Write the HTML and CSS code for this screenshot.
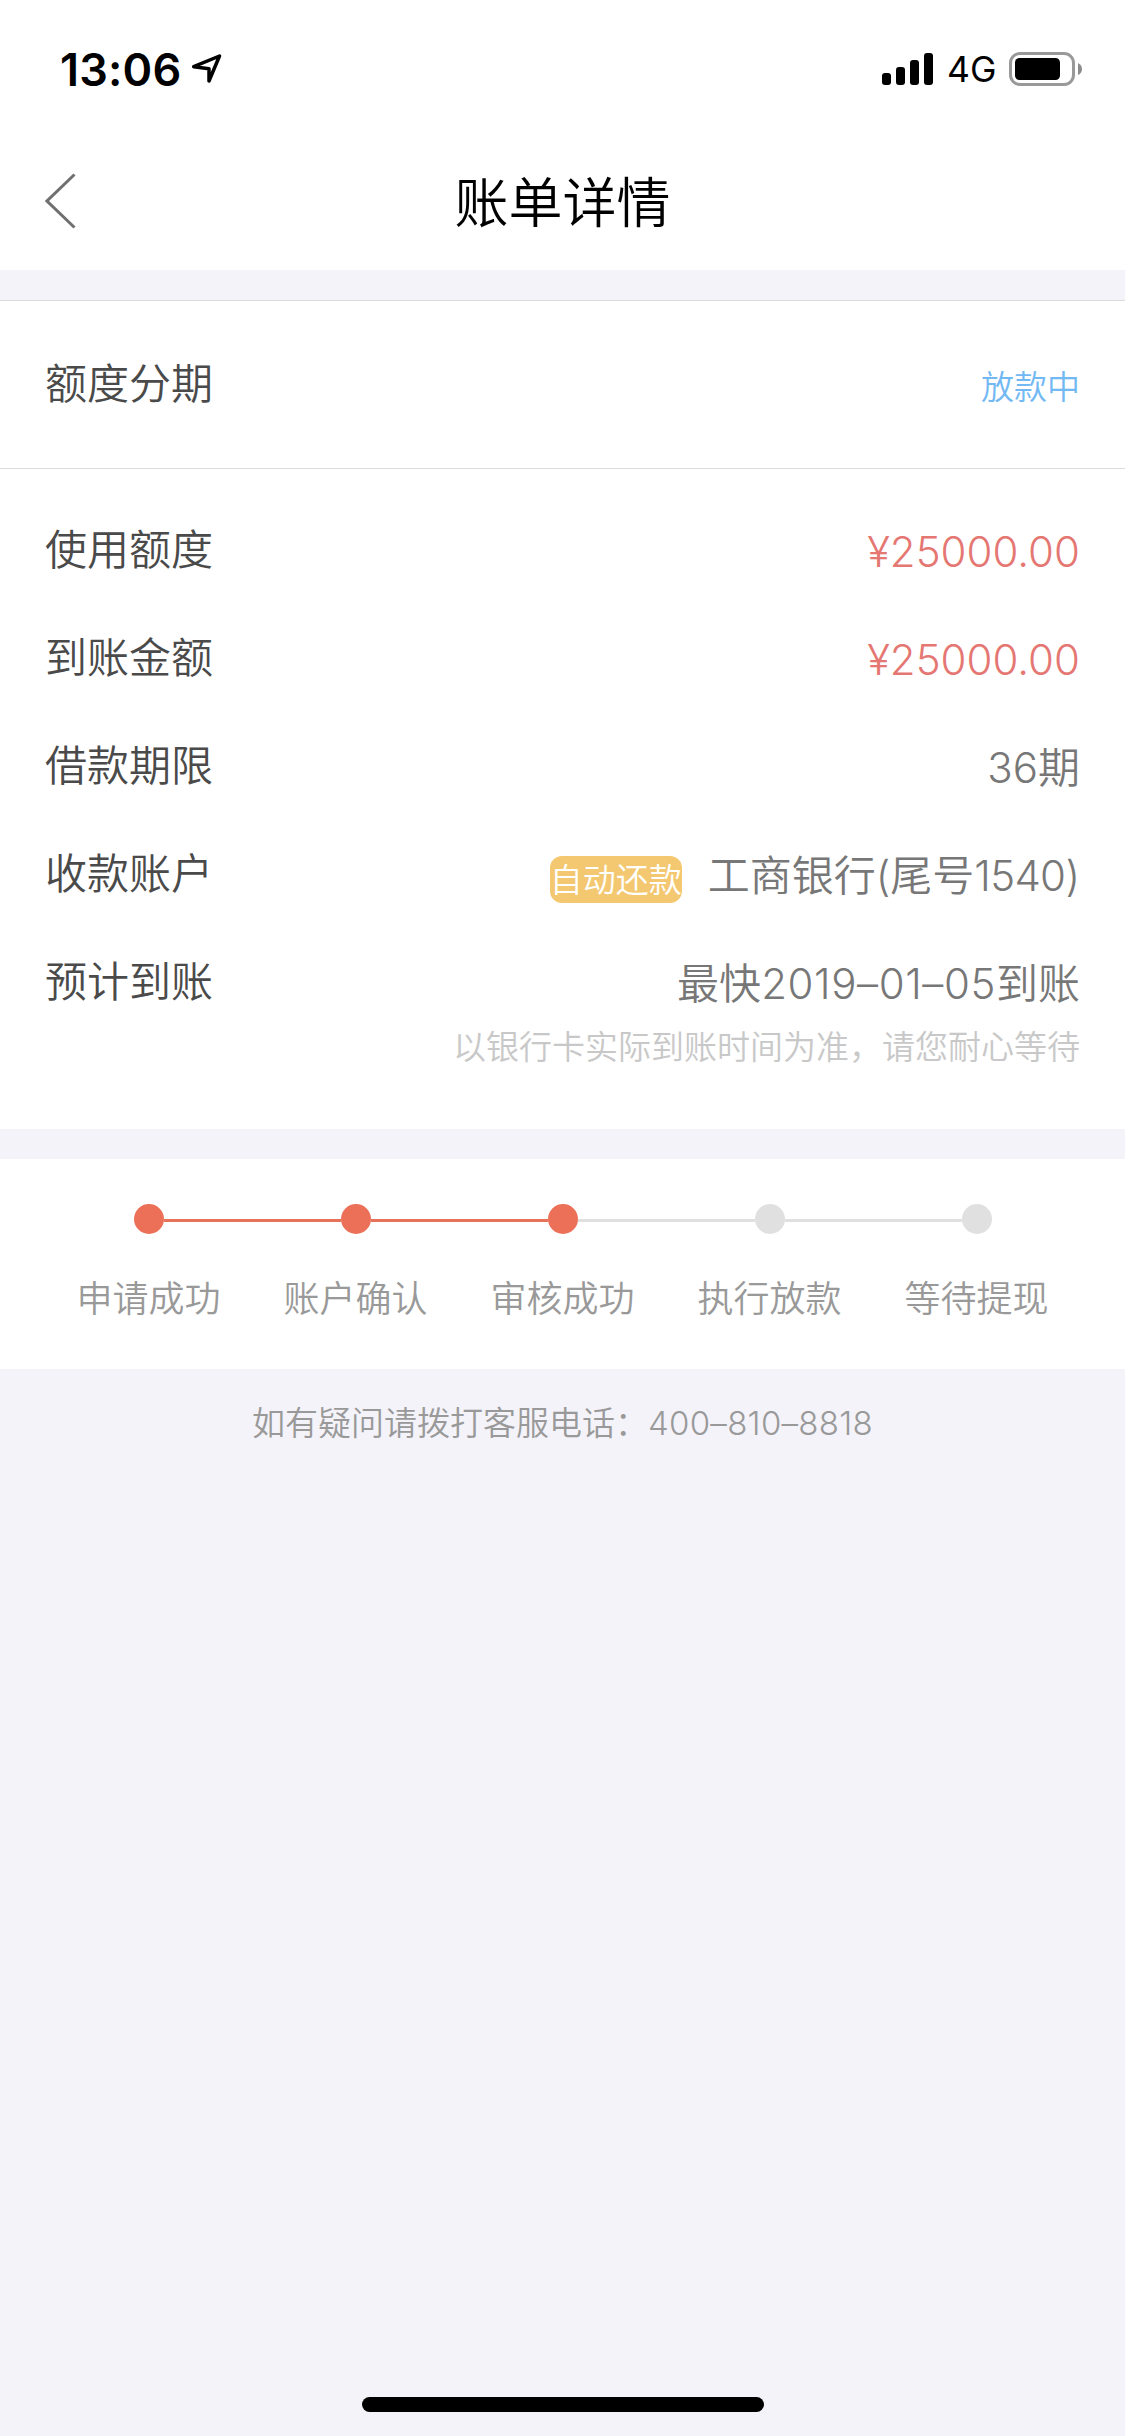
FILE: index.html
```html
<!DOCTYPE html>
<html lang="zh-CN">
<head>
<meta charset="utf-8">
<title>账单详情</title>
<link rel="stylesheet" href="styles.css">
</head>
<body>
<div class="screen">
  <header class="top">
    <div class="status-bar">
      <div class="status-left">
        <span class="time">13:06</span>
        <svg class="location" width="34" height="34" viewBox="0 0 34 34"><path d="M4.700 16.700L30.500 6L20 31V18.700Z" fill="none" stroke="#000" stroke-width="3.500" stroke-linejoin="round"/></svg>
      </div>
      <div class="status-right">
        <svg class="signal" width="51" height="32" viewBox="0 0 51 32"><rect x="0" y="20" width="9" height="12" rx="3"/><rect x="14" y="14" width="9" height="18" rx="3"/><rect x="28" y="7" width="9" height="25" rx="3"/><rect x="42" y="0" width="9" height="32" rx="3"/></svg>
        <span class="network">4G</span>
        <svg class="battery" width="74" height="34" viewBox="0 0 74 34"><rect x="1.500" y="1.500" width="63" height="31" rx="9.500" fill="none" stroke="#999" stroke-width="3"/><rect x="6" y="6" width="45" height="22" rx="4.500"/><path d="M69 11Q73 13 73 17Q73 21 69 23Z" fill="#8c8c8c"/></svg>
      </div>
    </div>
    <nav class="nav">
      <svg class="back" width="32" height="56" viewBox="0 0 32 56"><path d="M29.500 1.500L2 28L29.500 54.500" fill="none" stroke="#707070" stroke-width="3"/></svg>
      <h1 class="title">账单详情</h1>
    </nav>
  </header>

  <section class="card">
    <div class="card-head">
      <span class="label">额度分期</span>
      <span class="state">放款中</span>
    </div>
    <div class="details">
      <div class="row"><span class="label">使用额度</span><span class="value money">¥25000.00</span></div>
      <div class="row"><span class="label">到账金额</span><span class="value money">¥25000.00</span></div>
      <div class="row"><span class="label">借款期限</span><span class="value">36期</span></div>
      <div class="row"><span class="label">收款账户</span><div class="account"><span class="tag">自动还款</span><span class="value">工商银行(尾号<span class="card-no">1540</span>)</span></div></div>
      <div class="row"><span class="label">预计到账</span><span class="value">最快<span class="date">2019–01–05</span>到账</span></div>
      <p class="hint">以银行卡实际到账时间为准，请您耐心等待</p>
    </div>
  </section>

  <ol class="steps">
    <li class="step done"><i class="dot"></i><span>申请成功</span></li>
    <li class="step done"><i class="dot"></i><span>账户确认</span></li>
    <li class="step done"><i class="dot"></i><span>审核成功</span></li>
    <li class="step"><i class="dot"></i><span>执行放款</span></li>
    <li class="step"><i class="dot"></i><span>等待提现</span></li>
  </ol>

  <p class="service">如有疑问请拨打客服电话：<span class="phone">400–810–8818</span></p>
  <div class="home-bar"></div>
</div>
</body>
</html>
```
FILE: styles.css
```css
* { box-sizing: border-box; margin: 0; padding: 0; }

body {
  background: #f4f3f9;
  font-family: Inter, "Noto Sans CJK SC DemiLight", "Noto Sans CJK SC", sans-serif;
  font-weight: 350;
}

.screen {
  display: flex;
  flex-direction: column;
  width: 1125px;
  height: 2436px;
}

.top { height: 270px; background: #fff; }

.status-bar {
  display: flex;
  justify-content: space-between;
  height: 132px;
  padding: 0 42px 0 60px;
}

.status-left, .status-right { display: flex; align-items: flex-start; }

.time {
  width: 129px;
  margin-top: 40px;
  font-size: 45px;
  font-weight: 600;
  letter-spacing: 0.2px;
  line-height: 60px;
  white-space: nowrap;
}

.location { margin-top: 50px; }
.signal { margin-top: 53px; }

.network {
  width: 62px;
  margin: 50px 0 0 14px;
  font-size: 35.5px;
  font-weight: 400;
  line-height: 40px;
}

.battery { margin-top: 52px; }

.nav {
  display: grid;
  grid-template-columns: 165px 1fr 165px;
  align-items: center;
  height: 138px;
}

.back { margin-left: 45px; }

.title {
  padding-top: 6px;
  font-size: 54px;
  font-weight: 400;
  line-height: 80px;
  text-align: center;
}

.card {
  height: 829px;
  margin-top: 30px;
  border-top: 1px solid #dcdce0;
  background: #fff;
}

.card-head {
  display: flex;
  align-items: center;
  justify-content: space-between;
  height: 168px;
  padding: 0 45px;
  border-bottom: 1px solid #dcdcde;
}

.label { color: #4a4a4a; font-size: 42px; line-height: 60px; }
.card-head .label { margin-top: -2px; }
.state { padding-top: 5px; color: #72b9f3; font-size: 33px; line-height: 48px; }

.details { padding: 27px 45px 0; }

.row {
  display: flex;
  align-items: center;
  justify-content: space-between;
  height: 108px;
}

.value { padding-top: 4px; color: #777; font-size: 42px; line-height: 60px; }
.money { color: #e57773; }
.account { display: flex; align-items: center; gap: 26px; }
.card-no { letter-spacing: -0.7px; }
.date { letter-spacing: 0.6px; }

.tag {
  height: 47px;
  margin-top: 10px;
  border-radius: 12px;
  background: #f3c871;
  color: #fff;
  font-size: 33px;
  line-height: 48px;
}

.hint {
  margin-top: -9px;
  color: #c8c8c8;
  font-size: 33px;
  line-height: 40px;
  text-align: right;
}

.steps {
  display: flex;
  height: 210px;
  margin-top: 30px;
  padding: 45px 45px 0;
  background: #fff;
  list-style: none;
}

.step {
  position: relative;
  display: flex;
  flex: 1;
  flex-direction: column;
  align-items: center;
  gap: 40px;
  color: #999;
  font-size: 36px;
  line-height: 50px;
}

/* Connector from the previous step's dot to this one. */
.step + .step::before {
  position: absolute;
  top: 15px;
  right: calc(50% + 15px);
  width: calc(100% - 30px);
  height: 3px;
  background: #e0e0e0;
  content: "";
}

.step.done + .done::before { background: #e57259; }

.dot { width: 30px; height: 30px; border-radius: 50%; background: #e0e0e0; }
.done .dot { background: #ec7058; }

.service {
  margin-top: 30px;
  color: #999;
  font-size: 33px;
  line-height: 48px;
  text-align: center;
}

.phone { letter-spacing: 0.3px; }

.home-bar {
  width: 402px;
  height: 15px;
  margin: auto auto 24px;
  border-radius: 8px;
  background: #000;
}
```
